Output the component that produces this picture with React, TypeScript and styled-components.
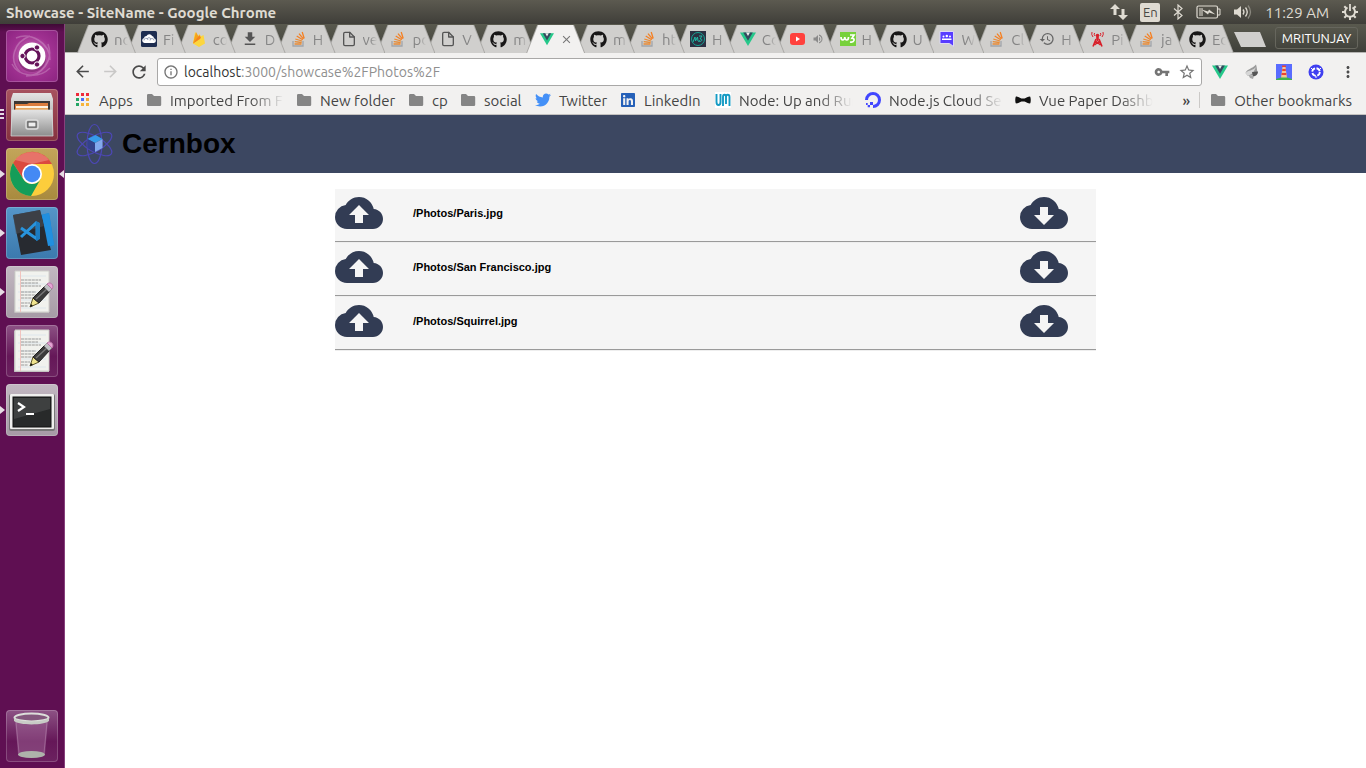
import React from 'react';
import styled, { createGlobalStyle, css } from 'styled-components';
import {
  MdArrowBack, MdArrowForward, MdRefresh, MdInfoOutline, MdVpnKey, MdStarBorder, MdMoreVert,
  MdHistory, MdVolumeUp, MdCloudUpload, MdCloudDownload, MdFileDownload, MdClose,
} from 'react-icons/md';
import { FaGithub, FaTwitter, FaLinkedin } from 'react-icons/fa';
import { FiFile } from 'react-icons/fi';

const uiFont = '"Ubuntu", "Noto Sans", "Open Sans", sans-serif';

const GlobalStyle = createGlobalStyle`
  * { box-sizing: border-box; }
  body { margin: 0; background: #fff; font-family: ${uiFont}; }
  button { font: inherit; padding: 0; border: 0; background: none; color: inherit; }
  a { color: inherit; text-decoration: none; }
  svg { display: block; flex: none; }
`;

const Desktop = styled.div`
  display: flex;
  flex-direction: column;
  min-height: 100vh;
`;

const Panel = styled.header`
  display: flex;
  align-items: center;
  justify-content: space-between;
  height: 24px;
  padding: 0 7px 0 6px;
  color: #dfdbd2;
  background: linear-gradient(#5c5a50, #3f3e39);
`;

const WindowTitle = styled.div`
  font-size: 15px;
  font-weight: 700;
  white-space: nowrap;
`;

const Indicators = styled.div`
  display: flex;
  align-items: center;
  gap: 12px;
  font-size: 15px;
  white-space: nowrap;
`;

const Lang = styled.button`
  width: 20px;
  height: 19px;
  border-radius: 2px;
  background: #dfdbd2 !important;
  color: #4a4943 !important;
  font-size: 13px !important;
  line-height: 19px;
`;

const Clock = styled.time`
  font-size: 15px;
`;

const Work = styled.div`
  display: flex;
  flex: 1;
`;

const Launcher = styled.nav`
  display: flex;
  flex-direction: column;
  gap: 7px;
  width: 65px;
  flex: none;
  padding: 6px 0 6px 6px;
  background: linear-gradient(#3f0a36, #5f0f52 8px);
  border-right: 1px solid #87407c;
`;

const tileTone = {
  ubuntu: 'radial-gradient(circle, #d88bc9, #a03191 55%, #8b2380)',
  files: 'linear-gradient(#a7525f, #85323f)',
  chrome: 'linear-gradient(#c3a55a, #a88a3e)',
  code: 'linear-gradient(#5596c9, #3b79ad)',
  grey: 'linear-gradient(#c2b7c1, #a69ba6)',
  clear: 'linear-gradient(#8d5285, #651758 60%, #6c2260)',
};

const Tile = styled.button<{ $tone: keyof typeof tileTone }>`
  position: relative;
  width: 52px;
  height: 52px;
  border-radius: 4px;
  background: ${p => tileTone[p.$tone]};
  box-shadow: inset 0 0 0 1px rgba(255, 255, 255, 0.2);
  &:last-child { margin-top: auto; }
`;

const RunningMark = styled.i<{ $side: 'left' | 'right' }>`
  position: absolute;
  top: 22px;
  border: 4px solid transparent;
  ${p => p.$side === 'left'
    ? css`left: -6px; border-left: 5px solid #e6dce4; border-right: 0;`
    : css`right: -6px; border-right: 5px solid #e6dce4; border-left: 0;`}
`;

const StackMark = styled.i`
  position: absolute;
  left: -6px;
  top: 20px;
  width: 4px;
  height: 10px;
  background: repeating-linear-gradient(#e6dce4 0 2px, transparent 2px 4px);
`;

const Browser = styled.div`
  display: flex;
  flex-direction: column;
  flex: 1;
  min-width: 0;
`;

const TabStrip = styled.div`
  display: flex;
  height: 29px;
  padding: 1px 8px 0 12px;
  background: linear-gradient(#59594e, #3f403a);
  border-bottom: 1px solid #b5b4b2;
`;

const Tabs = styled.div`
  display: flex;
  flex: 1;
  min-width: 0;
  height: 28px;
  padding-right: 9px;
`;

const Tab = styled.button<{ $active?: boolean; $order: number }>`
  position: relative;
  z-index: ${p => (p.$active ? 40 : p.$order)};
  display: flex;
  align-items: center;
  flex: 1 1 0;
  min-width: 0;
  gap: 6px;
  height: 28px;
  margin-right: -9px;
  padding-left: 14px;
  color: #858585 !important;
  text-align: left;
  &::before, &::after {
    content: '';
    position: absolute;
    inset: 0;
    z-index: -1;
    background: #aaa9a6;
    clip-path: polygon(0 100%, 11px 0, calc(100% - 11px) 0, 100% 100%);
  }
  &::after {
    inset: 0 1px;
    background: ${p => (p.$active ? '#f2f1f0' : '#d0cfcd')};
  }
`;

const TabLabel = styled.span`
  width: 14px;
  overflow: hidden;
  font-size: 15px;
  white-space: nowrap;
  mask-image: linear-gradient(to right, #000 7px, transparent);
`;

const NewTab = styled.button`
  width: 32px;
  height: 15px;
  margin: 7px 9px 0 0;
  background: #d0cfcd !important;
  clip-path: polygon(0 0, 26px 0, 100% 100%, 7px 100%);
`;

const Profile = styled.button`
  width: 83px;
  height: 22px;
  margin-top: 2px;
  border: 1px solid #66665d !important;
  border-radius: 3px;
  color: #fff !important;
  font-size: 13px !important;
`;

const Toolbar = styled.div`
  display: flex;
  align-items: center;
  height: 33px;
  padding: 4px 10px 0 8px;
  background: #f2f1f0;
  color: #4c4c4c;
`;

const NavButton = styled.button<{ $off?: boolean }>`
  width: 28px;
  height: 28px;
  color: ${p => (p.$off ? '#c9c8c7' : '#4a4a4a')} !important;
`;

const Omnibox = styled.div`
  display: flex;
  align-items: center;
  flex: 1;
  height: 28px;
  margin-right: 10px;
  padding: 0 5px;
  border: 1px solid #a9a8a7;
  border-radius: 3px;
  background: #fff;
  color: #757575;
`;

const Host = styled.label`
  margin-left: 5px;
  color: #333;
  font-size: 14px;
`;

const Address = styled.input`
  flex: 1;
  min-width: 0;
  height: 24px;
  margin-right: 8px;
  padding: 0;
  border: 0;
  outline: 0;
  background: transparent;
  color: #8f8f8f;
  font: 14px ${uiFont};
`;

const IconButton = styled.button`
  margin-left: 8px;
`;

const Extensions = styled.div`
  display: flex;
  align-items: center;
  gap: 16px;
`;

const MenuButton = styled.button`
  display: flex;
  justify-content: center;
  width: 16px;
`;

const Bookmarks = styled.nav`
  display: flex;
  align-items: center;
  height: 29px;
  padding: 0 14px 0 10px;
  border-bottom: 1px solid #c4c2c0;
  background: #f2f1f0;
  color: #444;
  font-size: 15px;
`;

const Bookmark = styled.a<{ $width?: number }>`
  display: flex;
  align-items: center;
  gap: 8px;
  width: ${p => (p.$width ? p.$width + 'px' : 'auto')};
  white-space: nowrap;
`;

const BookmarkLabel = styled.span<{ $fade?: boolean }>`
  ${p => p.$fade && css`
    width: 114px;
    overflow: hidden;
    mask-image: linear-gradient(to right, #000 80px, transparent);
  `}
`;

const More = styled.button`
  margin-left: auto;
  padding-right: 9px !important;
  font-weight: 500 !important;
`;

const Divider = styled.i`
  width: 1px;
  height: 16px;
  margin-right: 10px;
  background: #cbc9c7;
`;

const SiteHeader = styled.header`
  display: flex;
  align-items: center;
  gap: 8px;
  height: 58px;
  padding-left: 10px;
  background: #3c4761;
`;

const SiteName = styled.h1`
  margin: 0;
  color: #000;
  font: 700 28px/32px "Liberation Sans", Arial, sans-serif;
`;

const FileList = styled.main`
  width: 100%;
  max-width: 761px;
  margin: 16px auto 0;
`;

const FileRow = styled.div`
  display: flex;
  align-items: center;
  height: 54px;
  padding: 0 28px 5px 0;
  background: #f5f5f5;
  border-bottom: 1px solid #eee;
  box-shadow: inset 0 -1px #9a9a9a;
  color: #323c54;
`;

const FileName = styled.h2`
  flex: 1;
  margin: 0 0 0 30px;
  color: #000;
  font: 700 11px/16px "Liberation Sans", Arial, sans-serif;
`;

const CloudButton = styled.button`
  width: 48px;
  height: 48px;
`;

/* Favicons and other small marks */

const StackOverflow = () => (
  <svg width="16" height="16" viewBox="0 0 16 16" fill="none">
    <path d="M2 10v5h10v-5" stroke="#a0a5aa" strokeWidth="1.3" />
    <path d="M3.5 13h7M3.7 10.7l7 .8M4.3 8l6.7 2" stroke="#e88b35" strokeWidth="1.3" />
    <path d="M5.7 5l6 3.7M8 2.7l4.4 5.2M11.2 1l2 6.5" stroke="#f48024" strokeWidth="1.3" />
  </svg>
);

const Vue = ({ size = 16 }: { size?: number }) => (
  <svg width={size} height={size} viewBox="0 0 16 16">
    <path d="M0 1.5h16L8 15z" fill="#25c88a" />
    <path d="M3.2 1.5h9.6L8 9.8z" fill="#35495e" />
    <path d="M6 1.5h4L8 5z" fill="#f2f1f0" />
  </svg>
);

const Cloud = () => (
  <svg width="16" height="16" viewBox="0 0 16 16">
    <rect width="16" height="16" rx="1.5" fill="#1d2d50" />
    <path d="M3.500 12a2.500 2.500 0 0 1-.5-4.900 2.600 2.600 0 0 1 2.500-2.200 3.200 3.200 0 0 1 5.600.2 2.400 2.400 0 0 1 1.900 2.200A2.400 2.400 0 0 1 13 12z" fill="#fff" />
    <path d="M3 9.500a2 2 0 0 1 4-.5M6 8a2.200 2.200 0 0 1 4 0M9 9.500a2 2 0 0 1 4 0" stroke="#8490aa" fill="none" strokeWidth=".8" />
  </svg>
);

const Firebase = () => (
  <svg width="16" height="16" viewBox="0 0 16 16">
    <path d="M2 12.500L4 1l3 4 1.500-2 1.500 2.200L12.500 4 14 12.500 8 16z" fill="#fcd63f" />
    <path d="M2 12.500L5 1l4 7z" fill="#f6a21b" />
    <path d="M2 12.500L8.500 4l1.500 3z" fill="#f58220" />
  </svg>
);

const Muut = () => (
  <svg width="16" height="16" viewBox="0 0 16 16">
    <rect width="16" height="16" fill="#2c3042" />
    <circle cx="8" cy="8" r="6.500" fill="none" stroke="#16a394" />
    <path d="M3 11l2-5 .5 4 2-4 .5 4c1 1 1.500 0 2-1M9 5h3L10 8c3-1 2 4-1 2" fill="none" stroke="#1fbba8" />
  </svg>
);

const YouTube = () => (
  <svg width="16" height="16" viewBox="0 0 16 16">
    <rect y="2" width="15" height="12" rx="3" fill="#ff413d" />
    <path d="M6 5.500v5L10 8z" fill="#fff" />
  </svg>
);

const W3 = () => (
  <svg width="16" height="16" viewBox="0 0 16 16">
    <rect width="16" height="14" y="1" fill="#77d13c" />
    <path d="M1 6c0 4 3.500 4 3.800 0 .3 4 3.700 4 3.700 0M10 4h4l-2 3.200c3.200-.2 2.800 4.800-2 3.800" fill="none" stroke="#fff" strokeWidth="1.700" />
  </svg>
);

const Group = () => (
  <svg width="16" height="16" viewBox="0 0 16 16">
    <path d="M1 .5h13.500v15l-4-3H1z" fill="#573cff" stroke="#ddd8f5" />
    <circle cx="4.500" cy="5.500" r="1" fill="#fff" /><circle cx="7.800" cy="5" r="1.200" fill="#fff" /><circle cx="11" cy="5.500" r="1" fill="#fff" />
    <path d="M3 9V7.500h9.500V9z" fill="#fff" />
  </svg>
);

const Beacon = () => (
  <svg width="16" height="16" viewBox="0 0 16 16" stroke="#d8202a" fill="none" strokeWidth="1.600">
    <path d="M7 7h3M7 8L4 15.500M10 8l3 7.500M6.500 10l5 4M10.500 10l-5 4M8.500 4v6" />
    <path d="M3 1q-1 2.500 1 5M14 1q1 2.500-1 5M5.500 2q-.8 1.500.5 3M11.500 2q.8 1.500-.5 3" strokeWidth="1" />
    <circle cx="8.500" cy="4.500" r="1.800" fill="#d8202a" stroke="none" />
  </svg>
);

const Um = () => (
  <svg width="16" height="16" viewBox="0 0 16 16">
    <rect width="16" height="16" fill="#fff" />
    <path d="M1.500 2v8c0 4 4 4 4 0V2M8 14V5c0-3 3-3 3 0v7V5c0-3 3.500-3 3.500 0v9" fill="none" stroke="#159bc4" strokeWidth="1.900" />
  </svg>
);

const DigitalOcean = () => (
  <svg width="16" height="16" viewBox="0 0 16 16" fill="#4247ff">
    <path d="M8 16v-3a5 5 0 1 0-5-5H0a8 8 0 1 1 8 8z" />
    <path d="M5 10h3v3H5zM2.700 13H5v2.300H2.700zM1 11h1.700v2H1z" />
  </svg>
);

const BowTie = () => (
  <svg width="16" height="16" viewBox="0 0 16 16">
    <path d="M1 4.500c2 0 4 1.500 5.500 2h3c1.500-.5 3.500-2 5.500-2 1 1 1 6 0 7-2 0-4-1.500-5.500-2h-3c-1.500.5-3.500 2-5.500 2-1-1-1-6 0-7z" fill="#111" />
  </svg>
);

const Folder = () => (
  <svg width="16" height="16" viewBox="0 0 16 16">
    <path d="M1 3.200Q1 2 2.200 2H6l2 2h6q1.200 0 1.200 1.200v7.600q0 1.200-1.200 1.200H2.200Q1 14 1 12.800z" fill="#858585" />
  </svg>
);

const AppsGrid = () => {
  const colors = ['#ef2b3b', '#ef2b3b', '#ef2b3b', '#25a565', '#4a6dfc', '#f0a73c', '#25a565', '#f7b43c', '#f7b43c'];
  return (
    <svg width="16" height="16" viewBox="0 0 16 16">
      {colors.map((c, i) => <rect key={i} x={1 + (i % 3) * 5} y={1 + Math.floor(i / 3) * 5} width="3" height="3" fill={c} />)}
    </svg>
  );
};

const Feather = () => (
  <svg width="16" height="16" viewBox="0 0 16 16">
    <path d="M1.500 9C3 5 8 5 12 .5c1 3 1 6 1.500 8L9 11.500 4 12z" fill="#9a9a9a" />
    <path d="M1.500 9c3-3 7-2 10.500-6L9 9l-5 3z" fill="#d6d6d6" />
    <path d="M8 8l6-.5c0 3-2 4.500-5 5z" fill="#555" /><path d="M5 12h5l-1 3-3-1z" fill="#a7a7a7" />
  </svg>
);

const Lighthouse = () => (
  <svg width="16" height="16" viewBox="0 0 16 16">
    <rect width="16" height="16" fill="#596cff" />
    <path d="M6.500 3h3l1.500 11H5z" fill="#f4c494" />
    <path d="M6 1.500h4V3H6zM6.300 5h3.500v2H6.200zM5.700 9h4.600v2H5.500z" fill="#e94332" />
    <path d="M0 16v-1l5-1.500h6l5 1.500v1z" fill="#3fb34d" />
  </svg>
);

const Ring = () => (
  <svg width="16" height="16" viewBox="0 0 16 16">
    <circle cx="8" cy="8" r="7.500" fill="#3f3ff0" />
    <circle cx="8" cy="8" r="3.800" fill="none" stroke="#fff" strokeWidth="1.800" strokeDasharray="4.500 1.500" />
    <path d="M3 4l2 2M13 4l-2 2M8 12v2" stroke="#fff" />
  </svg>
);

const Network = () => (
  <svg width="18" height="16" viewBox="0 0 18 16" fill="#dfdbd2">
    <path d="M5 0l5 5H6.500v6h-3V5H0zM13 16l5-5h-3.500V5h-3v6H8z" />
  </svg>
);

const Bluetooth = () => (
  <svg width="12" height="16" viewBox="0 0 12 16" fill="none" stroke="#dfdbd2" strokeWidth="1.200">
    <path d="M2 4.500l8 7L6 15V1l4 3.500-8 7" />
  </svg>
);

const Battery = () => (
  <svg width="25" height="14" viewBox="0 0 25 14">
    <rect x="1" y="1" width="20.500" height="12" rx="1.500" fill="none" stroke="#dfdbd2" strokeWidth="1.200" />
    <path d="M22 4h2v6h-2" fill="none" stroke="#dfdbd2" />
    <path d="M3 3h4v8H3z" fill="#99968d" /><path d="M5.500 4.500l6.500 2 1-2 6.500 5-6.500-2-1 2z" fill="#dfdbd2" />
  </svg>
);

const Speaker = () => (
  <svg width="20" height="16" viewBox="0 0 20 16" fill="none" stroke="#dfdbd2" strokeWidth="1.300">
    <path d="M1 5.500h3l4-3.500v12l-4-3.500H1z" fill="#dfdbd2" stroke="none" />
    <path d="M10 5.500q2 2.500 0 5M12.500 3.500q3.500 4.500 0 9" />
    <path d="M15 1.500q5 6.500 0 13" stroke="#8a887f" />
  </svg>
);

const Gear = () => (
  <svg width="18" height="18" viewBox="0 0 18 18" fill="none" stroke="#dfdbd2">
    <path d="M6.500 4.500a5 5 0 1 0 5 0" strokeWidth="2" />
    <path d="M9 1v7" strokeWidth="1.800" />
    <path d="M9 14v3M1 9h3M14 9h3M3.300 3.300l2 2M14.700 3.300l-2 2M3.300 14.700l2-2M14.700 14.700l-2-2" strokeWidth="2" />
  </svg>
);

const Atom = () => (
  <svg width="39" height="42" viewBox="0 0 39 42" fill="none">
    <g stroke="#4c47b5" strokeWidth="1.200">
      <ellipse cx="19.500" cy="21" rx="7.500" ry="19.500" />
      <ellipse cx="19.500" cy="21" rx="7.500" ry="19.500" transform="rotate(60 19.500 21)" />
      <ellipse cx="19.500" cy="21" rx="7.500" ry="19.500" transform="rotate(120 19.500 21)" />
    </g>
    <path d="M12.500 16l8-4 7 4-7.500 4z" fill="#369be8" />
    <path d="M12.500 16l7.500 4v9l-7.500-4z" fill="#34428a" />
    <path d="M20 20l7.500-4v9L20 29z" fill="#83a9ed" />
  </svg>
);

/* Launcher drawings, each on a 52 by 52 tile */

const Art = ({ children }: { children: React.ReactNode }) => (
  <svg width="52" height="52" viewBox="0 0 52 52">{children}</svg>
);

const UbuntuArt = () => (
  <Art>
    <g fill="none" stroke="#fff" opacity=".22" strokeWidth="1.500">
      <path d="M14 42C2 30 8 12 24 6M10 8c14-6 34 4 34 22M42 14c6 16-6 32-22 32" />
      <path d="M6 34C12 46 32 50 44 38" />
    </g>
    <circle cx="26" cy="28" r="14" fill="#5f0f52" opacity=".4" />
    <circle cx="26" cy="26" r="13.500" fill="#fff" />
    <circle cx="26" cy="26" r="7" fill="none" stroke="#65135a" strokeWidth="3.200" />
    <g fill="#65135a" stroke="#fff" strokeWidth="1">
      <circle cx="16.500" cy="26" r="2.700" /><circle cx="31" cy="17.500" r="2.700" /><circle cx="31" cy="34.500" r="2.700" />
    </g>
  </Art>
);

const FilesArt = () => (
  <Art>
    <defs>
      <linearGradient id="steel" x2="0" y2="1"><stop stopColor="#e4e4e4" /><stop offset="1" stopColor="#8d8d8d" /></linearGradient>
    </defs>
    <path d="M7 4h38l2 6v36H5V10z" fill="url(#steel)" />
    <path d="M8 12h36v10H8z" fill="#3c3835" />
    <path d="M9 15h12l2-1h19v8H9z" fill="#dc7d3d" /><path d="M10 17h32v2H10z" fill="#fff3df" /><path d="M10 19h32v3H10z" fill="#e8a75e" />
    <path d="M6 21h40l1 26H5z" fill="url(#steel)" stroke="#ddd" strokeWidth=".7" />
    <rect x="20" y="31" width="12" height="9" rx="2" fill="#999" stroke="#ddd" strokeWidth="1.500" />
    <rect x="22" y="33" width="8" height="5" fill="#eee" stroke="#555" />
  </Art>
);

const ChromeArt = () => (
  <Art>
    <circle cx="26" cy="26" r="22" fill="#fccd3c" />
    <path d="M26 16h20A22 22 0 0 0 7 15l10.300 16z" fill="#db4a3f" />
    <path d="M7 15a22 22 0 0 0 18 33l9.700-17A10 10 0 0 1 17.300 31z" fill="#159d59" />
    <path d="M9 12a22 22 0 0 1 34 0L26 16z" fill="#ee8980" opacity=".65" />
    <circle cx="26" cy="26" r="10" fill="#fff" /><circle cx="26" cy="26" r="8.300" fill="#4489f4" />
  </Art>
);

const CodeArt = () => (
  <Art>
    <path d="M35 8l8-2 5 32-11 4z" fill="#1686d9" />
    <path d="M7 8l27-5 11 40-30 5z" fill="#272a30" />
    <path d="M7 8l27-5 4 16-28 8z" fill="#4b4e55" opacity=".6" />
    <path d="M36 8l7-2 5 32-6 1z" fill="#218fdf" />
    <path d="M31 15v17L15 21M31 15L15 30" fill="none" stroke="#2894dd" strokeWidth="3" strokeLinejoin="round" />
    <path d="M30 14l4 2v16l-4 2z" fill="#1c7bc0" />
  </Art>
);

const EditorArt = () => (
  <Art>
    <path d="M8 6h35v41H8z" fill="#b8b4b8" /><path d="M9 5h34v41H9z" fill="#f1f2ee" stroke="#cfcfca" />
    <path d="M12 10h28M12 18h28M12 26h28M12 34h28M12 42h28" stroke="#dde6ec" />
    <path d="M14.500 5v41" stroke="#f0c3be" />
    <path d="M15 14h20M15 17h17M15 20h20M15 26h15M15 29h16M15 32h13M15 37h9M15 40h7" stroke="#9a9a9a" strokeWidth="1.100" strokeDasharray="3 .6" />
    <path d="M24 41l3-9 6 5z" fill="#efe48e" stroke="#5c5528" />
    <path d="M24 41l1-3 2 2z" fill="#111" />
    <path d="M27 32l12-12 5 5-11 12z" fill="#3b3b3b" stroke="#222" /><path d="M30 33l12-11" stroke="#777" strokeWidth="1.500" />
    <path d="M38 21l3-3 5 5-3 3z" fill="#bfc0c4" stroke="#777" strokeWidth=".6" />
    <path d="M41 18c3-3 8 1 5 5z" fill="#e5a3d5" stroke="#b875a6" />
  </Art>
);

const TerminalArt = () => (
  <Art>
    <rect x="3" y="10" width="46" height="37" rx="2" fill="#777" />
    <rect x="4" y="10" width="44" height="35" rx="1" fill="#efefed" />
    <rect x="7" y="13" width="38" height="30" fill="#282a2a" stroke="#111" />
    <path d="M8 14h36v11L8 35z" fill="#4d5050" opacity=".6" />
    <path d="M12 19l6 4-6 4M20 30h8" fill="none" stroke="#fff" strokeWidth="2.200" />
  </Art>
);

const TrashArt = () => (
  <Art>
    <path d="M9 10l3 34c2 5 25 5 27 0l3-34z" fill="#b07ba8" opacity=".38" />
    <path d="M10 12l3 31M41 12l-3 31" stroke="#d8b7d2" opacity=".3" />
    <ellipse cx="25.500" cy="44.500" rx="13.500" ry="3.500" fill="#aeb3ab" />
    <ellipse cx="25.500" cy="7.500" rx="17" ry="4" fill="#84577d" stroke="#dcdeda" strokeWidth="2" />
    <path d="M8 8v3c5 4.500 30 4.500 35 0V8c-5 4.500-30 4.500-35 0z" fill="#c8cbc6" />
  </Art>
);

const GitHub = () => <FaGithub size={17} color="#181717" />;
const PageIcon = () => <FiFile size={16} color="#555" />;

type TabData = { icon: React.ReactNode; label: string; name: string };
const tabs: TabData[] = [
  { icon: <GitHub />, label: 'no', name: 'GitHub' },
  { icon: <Cloud />, label: 'Fi', name: 'Files' },
  { icon: <Firebase />, label: 'co', name: 'Console' },
  { icon: <MdFileDownload size={18} color="#555" />, label: 'D', name: 'Downloads' },
  { icon: <StackOverflow />, label: 'H', name: 'Stack Overflow' },
  { icon: <PageIcon />, label: 've', name: 'Page' },
  { icon: <StackOverflow />, label: 'po', name: 'Stack Overflow' },
  { icon: <PageIcon />, label: 'V', name: 'Page' },
  { icon: <GitHub />, label: 'm', name: 'GitHub' },
  { icon: <Vue size={14} />, label: '', name: 'Showcase - SiteName' },
  { icon: <GitHub />, label: 'm', name: 'GitHub' },
  { icon: <StackOverflow />, label: 'ht', name: 'Stack Overflow' },
  { icon: <Muut />, label: 'H', name: 'Page' },
  { icon: <Vue />, label: 'Co', name: 'Vue' },
  { icon: <YouTube />, label: '', name: 'YouTube' },
  { icon: <W3 />, label: 'H', name: 'W3Schools' },
  { icon: <GitHub />, label: 'U', name: 'GitHub' },
  { icon: <Group />, label: 'W', name: 'Group' },
  { icon: <StackOverflow />, label: 'Cl', name: 'Stack Overflow' },
  { icon: <MdHistory size={16} color="#666" />, label: 'H', name: 'History' },
  { icon: <Beacon />, label: 'Pi', name: 'Page' },
  { icon: <StackOverflow />, label: 'ja', name: 'Stack Overflow' },
  { icon: <GitHub />, label: 'Ed', name: 'GitHub' },
];

const bookmarks = [
  { icon: <AppsGrid />, label: 'Apps', width: 71 },
  { icon: <Folder />, label: 'Imported From Fire', width: 150, fade: true },
  { icon: <Folder />, label: 'New folder', width: 112 },
  { icon: <Folder />, label: 'cp', width: 52 },
  { icon: <Folder />, label: 'social', width: 75 },
  { icon: <FaTwitter size={16} color="#4490f7" />, label: 'Twitter', width: 85 },
  { icon: <FaLinkedin size={16} color="#2560b8" />, label: 'LinkedIn', width: 95 },
  { icon: <Um />, label: 'Node: Up and Running', width: 150, fade: true },
  { icon: <DigitalOcean />, label: 'Node.js Cloud Server', width: 150, fade: true },
  { icon: <BowTie />, label: 'Vue Paper Dashboard', width: 138, fade: true },
];

const files = ['/Photos/Paris.jpg', '/Photos/San Francisco.jpg', '/Photos/Squirrel.jpg'];

export default function App() {
  return (
    <Desktop>
      <GlobalStyle />
      <Panel>
        <WindowTitle>Showcase - SiteName - Google Chrome</WindowTitle>
        <Indicators>
          <Network />
          <Lang>En</Lang>
          <Bluetooth />
          <Battery />
          <Speaker />
          <Clock>11:29 AM</Clock>
          <Gear />
        </Indicators>
      </Panel>
      <Work>
        <Launcher aria-label="Launcher">
          <Tile $tone="ubuntu" aria-label="Dash"><UbuntuArt /></Tile>
          <Tile $tone="files" aria-label="Files"><FilesArt /><StackMark /></Tile>
          <Tile $tone="chrome" aria-label="Chrome"><ChromeArt /><RunningMark $side="left" /><RunningMark $side="right" /></Tile>
          <Tile $tone="code" aria-label="Code"><CodeArt /><RunningMark $side="left" /></Tile>
          <Tile $tone="grey" aria-label="Text editor"><EditorArt /><RunningMark $side="left" /></Tile>
          <Tile $tone="clear" aria-label="Notes"><EditorArt /></Tile>
          <Tile $tone="grey" aria-label="Terminal"><TerminalArt /><RunningMark $side="left" /></Tile>
          <Tile $tone="clear" aria-label="Trash"><TrashArt /></Tile>
        </Launcher>
        <Browser>
          <TabStrip>
            <Tabs>
              {tabs.map((tab, i) => (
                <Tab key={i} $active={i === 9} $order={30 - i} aria-label={tab.name}>
                  {tab.icon}
                  {tab.label && <TabLabel>{tab.label}</TabLabel>}
                  {i === 9 && <MdClose size={13} color="#777" />}
                  {i === 14 && <MdVolumeUp size={12} color="#8a8a8a" />}
                </Tab>
              ))}
            </Tabs>
            <NewTab aria-label="New tab" />
            <Profile>MRITUNJAY</Profile>
          </TabStrip>
          <Toolbar>
            <NavButton aria-label="Back"><MdArrowBack size={19} /></NavButton>
            <NavButton $off aria-label="Forward"><MdArrowForward size={19} /></NavButton>
            <NavButton aria-label="Reload"><MdRefresh size={20} /></NavButton>
            <Omnibox>
              <MdInfoOutline size={16} />
              <Host htmlFor="address">localhost</Host>
              <Address id="address" defaultValue=":3000/showcase%2FPhotos%2F" />
              <IconButton aria-label="Passwords"><MdVpnKey size={16} /></IconButton>
              <IconButton aria-label="Bookmark this page"><MdStarBorder size={18} /></IconButton>
            </Omnibox>
            <Extensions>
              <Vue /><Feather /><Lighthouse /><Ring />
              <MenuButton aria-label="Menu"><MdMoreVert size={18} /></MenuButton>
            </Extensions>
          </Toolbar>
          <Bookmarks aria-label="Bookmarks">
            {bookmarks.map(b => (
              <Bookmark key={b.label} href="#" $width={b.width}>
                {b.icon}
                <BookmarkLabel $fade={b.fade}>{b.label}</BookmarkLabel>
              </Bookmark>
            ))}
            <More aria-label="More bookmarks">»</More>
            <Divider />
            <Bookmark href="#"><Folder /><BookmarkLabel>Other bookmarks</BookmarkLabel></Bookmark>
          </Bookmarks>
          <SiteHeader>
            <Atom />
            <SiteName>Cernbox</SiteName>
          </SiteHeader>
          <FileList>
            {files.map(name => (
              <FileRow key={name}>
                <CloudButton aria-label={'Upload ' + name}><MdCloudUpload size={48} /></CloudButton>
                <FileName>{name}</FileName>
                <CloudButton aria-label={'Download ' + name}><MdCloudDownload size={48} /></CloudButton>
              </FileRow>
            ))}
          </FileList>
        </Browser>
      </Work>
    </Desktop>
  );
}
